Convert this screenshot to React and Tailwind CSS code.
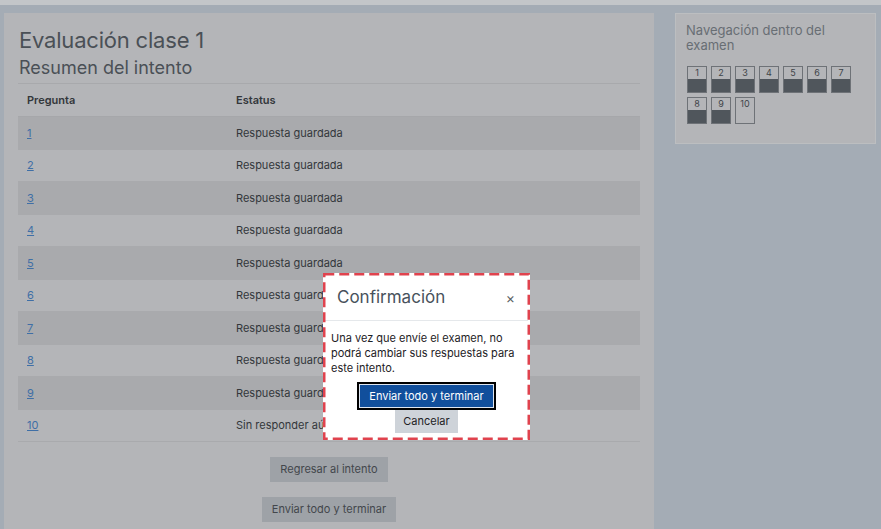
import React from "react";

const rows = [
  ["1", "Respuesta guardada"],
  ["2", "Respuesta guardada"],
  ["3", "Respuesta guardada"],
  ["4", "Respuesta guardada"],
  ["5", "Respuesta guardada"],
  ["6", "Respuesta guardada"],
  ["7", "Respuesta guardada"],
  ["8", "Respuesta guardada"],
  ["9", "Respuesta guardada"],
  ["10", "Sin responder aún"],
];

function NavBox({ n, done }) {
  return (
    <div className="w-[20px] h-[27px] border border-[#6e7277] flex flex-col">
      <div className="h-[12px] text-[9px] leading-[12px] text-[#3f4448] text-center">{n}</div>
      {done ? <div className="flex-1 bg-[#50565c]" /> : <div className="flex-1" />}
    </div>
  );
}

export default function App() {
  return (
    <div
      className="relative w-[881px] h-[529px] overflow-hidden bg-[#a4acb5]"
      style={{ fontFamily: "Inter, 'Noto Sans', sans-serif" }}
    >
      <div className="h-[5px] bg-[#c3c6c9]" />
      <div className="flex pt-[8px] pl-[4px] gap-[21px]">
        {/* Main card */}
        <div className="w-[650px] h-[520px] bg-[#b4b5b8] px-[14px] pt-[13px]">
          <h2 className="text-[22px] leading-[28px] text-[#4a5056] pl-[1px] tracking-[-0.2px]">Evaluación clase 1</h2>
          <h3 className="text-[18px] leading-[27px] text-[#4a5056] pl-[1px] border-b border-[#a8a9ac] pb-[2px]">
            Resumen del intento
          </h3>
          <div className="text-[11px] text-[#33373b]">
            <div className="flex h-[33px] items-center border-b border-[#a6a7aa]">
              <div className="w-[209px] pl-[9px] font-semibold">Pregunta</div>
              <div className="pl-[9px] font-semibold">Estatus</div>
            </div>
            {rows.map(([n, s], i) => (
              <div
                key={n}
                className={
                  "flex h-[32.5px] items-center border-b border-[#a9aaad] " +
                  (i % 2 === 0 ? "bg-[#a9aaad]" : "")
                }
              >
                <div className="w-[209px] pl-[9px]">
                  <span className="text-[#3f6fa6] underline">{n}</span>
                </div>
                <div className="pl-[9px]">{s}</div>
              </div>
            ))}
          </div>
          <div className="flex flex-col items-center gap-[15px] mt-[15px]">
            <div className="h-[25px] px-[10px] bg-[#9ea2a7] text-[11px] leading-[25px] text-[#43474c]">
              Regresar al intento
            </div>
            <div className="h-[25px] px-[10px] bg-[#9ea2a7] text-[11px] leading-[25px] text-[#43474c]">
              Enviar todo y terminar
            </div>
          </div>
        </div>

        {/* Sidebar */}
        <div className="w-[201px] h-[131px] bg-[#b4b5b8] border border-[#bcbec0] px-[10px] pt-[9px]">
          <div className="text-[13px] leading-[15px] text-[#686e74]">Navegación dentro del examen</div>
          <div className="flex flex-wrap gap-x-[4px] gap-y-[4px] mt-[13px] pl-[1px] w-[175px]">
            {[1, 2, 3, 4, 5, 6, 7, 8, 9].map((n) => (
              <NavBox key={n} n={n} done />
            ))}
            <NavBox n={10} />
          </div>
        </div>
      </div>

      {/* Modal */}
      <div className="absolute left-[323px] top-[273px] w-[207px] h-[167px] bg-white p-[2px]">
        <svg className="absolute inset-0 pointer-events-none" width="207" height="167">
          <rect
            x="1.25"
            y="1.25"
            width="204.5"
            height="164.5"
            fill="none"
            stroke="#e0434e"
            strokeWidth="2.5"
            strokeDasharray="10 5"
          />
        </svg>
        <div className="flex items-center justify-between h-[46px] pl-[12px] pr-[13px] border-b border-[#e5e8eb]">
          <span className="text-[17px] text-[#48525c]">Confirmación</span>
          <span className="text-[14px] text-[#5a5f64]">×</span>
        </div>
        <div className="pl-[6px] pr-[4px] pt-[10px] text-[11px] leading-[15px] text-[#1d2125]">
          Una vez que envíe el examen, no podrá cambiar sus respuestas para este intento.
        </div>
        <div className="flex flex-col items-center mt-[6px]">
          <div className="border-2 border-black">
            <div className="border border-[#dfe6f0] bg-[#114f9c] text-white text-[11px] leading-[22px] px-[9px]">
              Enviar todo y terminar
            </div>
          </div>
          <div className="bg-[#ced3d9] text-[#1d2125] text-[11px] leading-[23px] px-[8px]">Cancelar</div>
        </div>
      </div>
    </div>
  );
}
